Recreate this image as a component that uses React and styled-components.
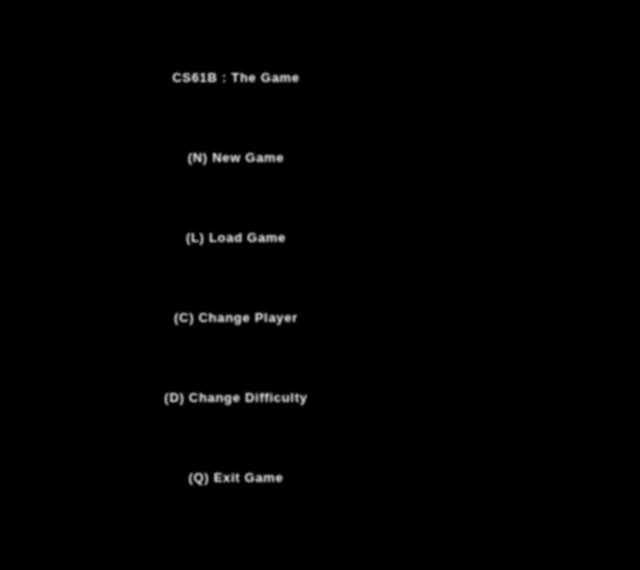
import React from 'react';
import styled, {createGlobalStyle} from 'styled-components';

const GlobalStyle = createGlobalStyle`
    html, body {
        margin: 0;
        padding: 0;
        background: #000;
    }
`;

const items = [
    'CS61B : The Game',
    '(N) New Game',
    '(L) Load Game',
    '(C) Change Player',
    '(D) Change Difficulty',
    '(Q) Exit Game',
];

const App = () => {
    return (
        <>
            <GlobalStyle />
            <Screen>
                <Menu>
                    {items.map((label) => (
                        <MenuItem key={label}>{label}</MenuItem>
                    ))}
                </Menu>
            </Screen>
        </>
    );
};

const Screen = styled.div`
    width: 640px;
    height: 570px;
    background: #000;
    overflow: hidden;
`;

const Menu = styled.div`
    width: 472px;
    padding-top: 37px;
    display: flex;
    flex-direction: column;
    align-items: center;
    filter: blur(1.2px);
`;

const MenuItem = styled.div`
    height: 80px;
    display: flex;
    align-items: center;
    font-family: "Liberation Sans", Arial, sans-serif;
    font-weight: bold;
    font-size: 13px;
    letter-spacing: 0.7px;
    color: #fff;
`;

export default App;
